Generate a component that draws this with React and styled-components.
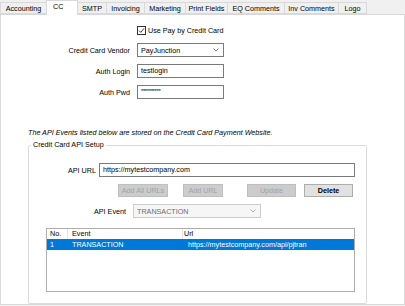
import React from 'react';
import styled, { createGlobalStyle } from 'styled-components';

const FONT = '7.2px';

const GlobalStyle = createGlobalStyle`
  html, body {
    margin: 0;
    padding: 0;
  }
  body {
    background: #f0f0f0;
    font-family: "Liberation Sans", Arial, sans-serif;
    font-size: ${FONT};
    color: #000;
  }
`;

const tabs = [
  { name: 'Accounting', w: 47 },
  { name: 'CC', w: 32, active: true },
  { name: 'SMTP', w: 30 },
  { name: 'Invoicing', w: 39 },
  { name: 'Marketing', w: 42 },
  { name: 'Print Fields', w: 43 },
  { name: 'EQ Comments', w: 58 },
  { name: 'Inv Comments', w: 55 },
  { name: 'Logo', w: 29 },
];

const buttons = [
  { label: 'Add All URLs', w: 50, ml: 0, disabled: true },
  { label: 'Add URL', w: 40, ml: 15, disabled: true },
  { label: 'Update', w: 49, ml: 24, disabled: true },
  { label: 'Delete', w: 49, ml: 8 },
];

function Chevron({ color }) {
  return (
    <svg width="6" height="4" viewBox="0 0 6 4">
      <polyline points="0.5,0.5 3,3 5.5,0.5" fill="none" stroke={color} strokeWidth="0.8" />
    </svg>
  );
}

function App() {
  return (
    <Window>
      <GlobalStyle />
      <TabBar>
        {tabs.map((t, i) => (
          <Tab key={t.name} $w={t.w} $active={t.active} $first={i === 0}>
            {t.name}
          </Tab>
        ))}
      </TabBar>

      <Panel>
        <FormGrid>
          <span />
          <CheckRow>
            <CheckBox>
              <svg width="7" height="7" viewBox="0 0 7 7">
                <polyline points="1,3.6 2.8,5.4 6,1.4" fill="none" stroke="#222" strokeWidth="0.9" />
              </svg>
            </CheckBox>
            Use Pay by Credit Card
          </CheckRow>

          <Label>Credit Card Vendor</Label>
          <SelectBox>
            <span>PayJunction</span>
            <Chevron color="#555" />
          </SelectBox>

          <Label>Auth Login</Label>
          <TextBox>testlogin</TextBox>

          <Label>Auth Pwd</Label>
          <TextBox $pwd>**********</TextBox>
        </FormGrid>

        <Note>The API Events listed below are stored on the Credit Card Payment Website.</Note>

        <GroupBox>
          <Legend>Credit Card API Setup</Legend>

          <FieldLine $top={13}>
            <Label $w={67} $gap={3}>API URL</Label>
            <TextBox $w={256}>https://mytestcompany.com</TextBox>
          </FieldLine>

          <ButtonRow>
            {buttons.map((b) => (
              <Button key={b.label} $w={b.w} $ml={b.ml} disabled={b.disabled}>
                {b.label}
              </Button>
            ))}
          </ButtonRow>

          <FieldLine $top={7}>
            <Label $w={97} $gap={7}>API Event</Label>
            <SelectBox $w={128} $disabled>
              <span>TRANSACTION</span>
              <Chevron color="#a0a0a0" />
            </SelectBox>
          </FieldLine>

          <ListView>
            <ListHeader>
              <HeadCell $pl={3}>No.</HeadCell>
              <HeadCell $pl={4}>Event</HeadCell>
              <HeadCell $pl={1} $last>Url</HeadCell>
            </ListHeader>
            <ListRow $selected>
              <Cell $pl={3}>1</Cell>
              <Cell $pl={3}>TRANSACTION</Cell>
              <Cell $pl={4}>https://mytestcompany.com/api/pjtran</Cell>
            </ListRow>
          </ListView>
        </GroupBox>
      </Panel>
    </Window>
  );
}

const Window = styled.div`
  width: 405px;
  height: 306px;
  display: flex;
  flex-direction: column;
  overflow: hidden;
`;

const TabBar = styled.div`
  display: flex;
  align-items: flex-end;
  height: 14px;
`;

const Tab = styled.div`
  box-sizing: border-box;
  width: ${(p) => p.$w}px;
  height: ${(p) => (p.$active ? 15 : 12)}px;
  margin-left: ${(p) => (p.$first ? 0 : -1)}px;
  margin-bottom: ${(p) => (p.$active ? -1 : 0)}px;
  padding-top: 1px;
  line-height: ${(p) => (p.$active ? 9 : 10)}px;
  text-align: ${(p) => (p.$active ? 'left' : 'center')};
  padding-left: ${(p) => (p.$active ? 6 : 0)}px;
  white-space: nowrap;
  background: ${(p) => (p.$active ? '#fff' : '#f0f0f0')};
  border: 1px solid #d9d9d9;
  border-bottom: ${(p) => (p.$active ? 'none' : '1px solid #d9d9d9')};
  position: relative;
  z-index: ${(p) => (p.$active ? 2 : 1)};
`;

const Panel = styled.div`
  box-sizing: border-box;
  width: 405px;
  height: 291px;
  background: #fff;
  border: 1px solid #d9d9d9;
  display: flex;
  flex-direction: column;
`;

const FormGrid = styled.div`
  display: grid;
  grid-template-columns: 129px 87px;
  column-gap: 7px;
  row-gap: 7px;
  padding-top: 12px;
  align-items: center;
`;

const CheckRow = styled.label`
  display: flex;
  align-items: center;
  height: 9px;
  gap: 2px;
  white-space: nowrap;
  margin-top: -1px;
  margin-bottom: 1px;
`;

const CheckBox = styled.span`
  box-sizing: border-box;
  width: 9px;
  height: 9px;
  border: 1px solid #333;
  background: #fff;
  display: flex;
  align-items: center;
  justify-content: center;
  flex: none;
`;

const Label = styled.span`
  text-align: right;
  white-space: nowrap;
  ${(p) => p.$w && `width: ${p.$w}px; margin-right: ${p.$gap}px; flex: none;`}
`;

const TextBox = styled.div`
  box-sizing: border-box;
  width: ${(p) => (p.$w ? `${p.$w}px` : 'auto')};
  height: 14px;
  border: 1px solid #7a7a7a;
  background: #fff;
  padding-left: 3px;
  line-height: ${(p) => (p.$pwd ? 11 : 12)}px;
  font-size: ${(p) => (p.$pwd ? '6px' : FONT)};
  letter-spacing: ${(p) => (p.$pwd ? '-0.4px' : 'normal')};
  white-space: nowrap;
  overflow: hidden;
`;

const SelectBox = styled.div`
  box-sizing: border-box;
  width: ${(p) => (p.$w ? `${p.$w}px` : 'auto')};
  height: 14px;
  border: 1px solid ${(p) => (p.$disabled ? '#cccccc' : '#7a7a7a')};
  background: ${(p) => (p.$disabled ? '#f6f6f6' : '#fff')};
  color: ${(p) => (p.$disabled ? '#6d6d6d' : '#000')};
  padding: 0 4px 0 3px;
  display: flex;
  align-items: center;
  justify-content: space-between;
  white-space: nowrap;
`;

const Note = styled.div`
  margin-top: 29px;
  padding-left: 27px;
  font-style: italic;
  line-height: 10px;
  white-space: nowrap;
`;

const GroupBox = styled.fieldset`
  box-sizing: border-box;
  margin: 2px 0 0 27px;
  padding: 0 0 11px 0;
  width: 339px;
  min-width: 0;
  border: 1px solid #dcdcdc;
  border-radius: 2px;
`;

const Legend = styled.legend`
  margin-left: 2px;
  padding: 0 2px;
  line-height: 10px;
  white-space: nowrap;
`;

const FieldLine = styled.div`
  display: flex;
  align-items: center;
  margin-top: ${(p) => p.$top}px;
`;

const ButtonRow = styled.div`
  display: flex;
  margin-top: 7px;
  padding-left: 89px;
`;

const Button = styled.button`
  box-sizing: border-box;
  width: ${(p) => p.$w}px;
  height: 13px;
  margin: 0 0 0 ${(p) => p.$ml}px;
  padding: 0;
  font-family: inherit;
  font-size: ${FONT};
  line-height: 11px;
  border: 1px solid ${(p) => (p.disabled ? '#bfbfbf' : '#adadad')};
  background: ${(p) => (p.disabled ? '#cccccc' : '#e1e1e1')};
  color: ${(p) => (p.disabled ? '#a3a3a3' : '#000')};
  font-weight: ${(p) => (p.disabled ? 400 : 700)};
`;

const ListView = styled.div`
  box-sizing: border-box;
  margin: 10px 0 0 17px;
  width: 309px;
  height: 64px;
  border: 1px solid #adadad;
  background: #fff;
`;

const ListHeader = styled.div`
  display: grid;
  grid-template-columns: 21px 115px 1fr;
  height: 10px;
  line-height: 10px;
`;

const HeadCell = styled.div`
  padding-left: ${(p) => p.$pl}px;
  border-right: ${(p) => (p.$last ? 'none' : '1px solid #e5e5e5')};
  white-space: nowrap;
`;

const ListRow = styled.div`
  display: grid;
  grid-template-columns: 22px 115px 1fr;
  height: 11px;
  line-height: 11px;
  background: ${(p) => (p.$selected ? '#0078d7' : 'transparent')};
  color: ${(p) => (p.$selected ? '#fff' : '#000')};
`;

const Cell = styled.div`
  padding-left: ${(p) => p.$pl}px;
  white-space: nowrap;
  overflow: hidden;
`;

export default App;
